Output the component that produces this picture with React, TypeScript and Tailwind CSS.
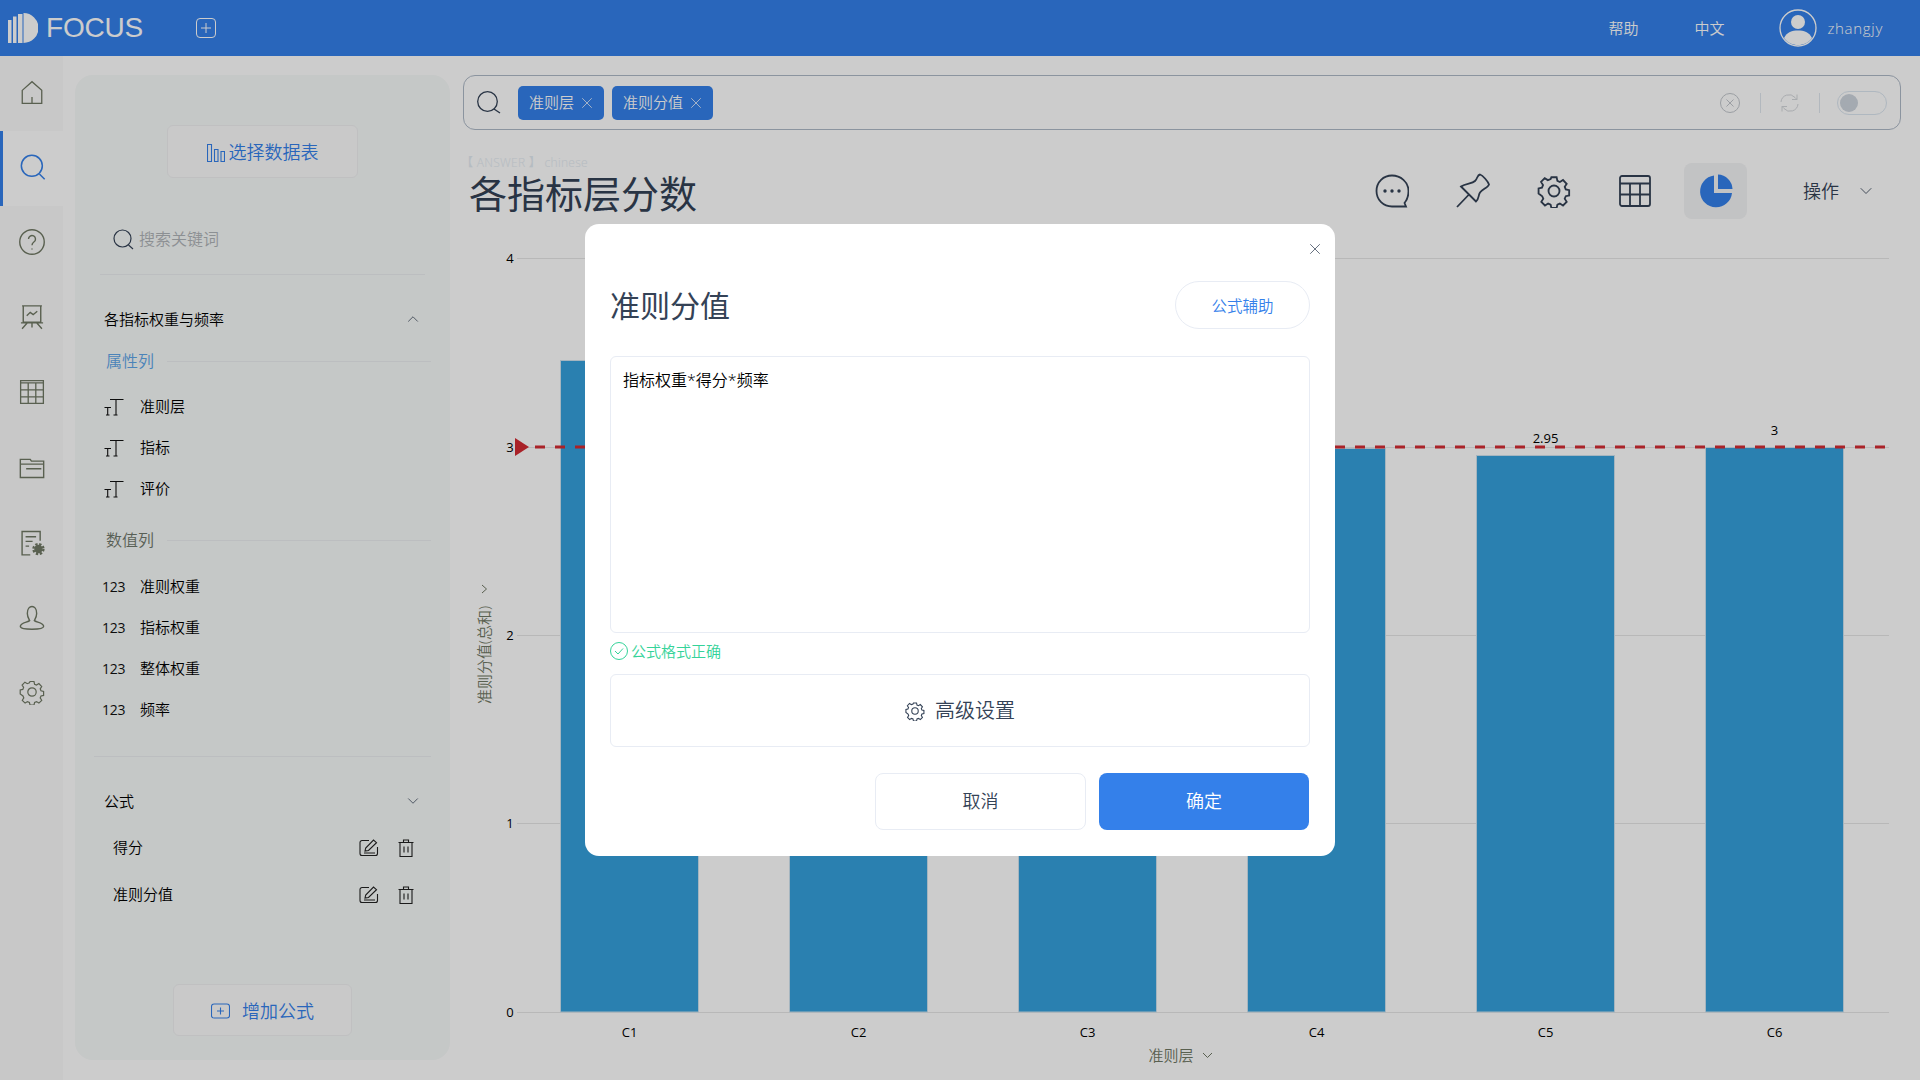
import { ChevronDown, ChevronUp, X } from "lucide-react";
import type { ReactNode } from "react";

const fontStack = { fontFamily: '"Open Sans", "Noto Sans CJK SC", sans-serif' };

function Ico({ size = 24, children, className, sw = 1.2 }: { size?: number; children: ReactNode; className?: string; sw?: number }) {
  return (
    <svg width={size} height={size} viewBox="0 0 24 24" fill="none" stroke="currentColor" strokeWidth={sw} className={className}>
      {children}
    </svg>
  );
}

const gearPath =
  "M10 2.5h4l.6 2.8 1.9.8 2.4-1.5 2.8 2.9-1.5 2.3.8 2 2.6.6v4l-2.6.6-.8 1.9 1.5 2.4-2.8 2.8-2.4-1.5-1.9.8-.6 2.6h-4l-.6-2.6-1.9-.8-2.4 1.5-2.8-2.8 1.5-2.4-.8-1.9L.2 15v-4l2.6-.6.8-2-1.5-2.3L4.900 3.200l2.400 1.500 2.100-.8z";

function Gear({ size = 24, sw = 1.2 }: { size?: number; sw?: number }) {
  return (
    <svg width={size} height={size} viewBox="-1 0 26 26" fill="none" stroke="currentColor" strokeWidth={sw}>
      <path d={gearPath} />
      <circle cx="12" cy="13" r="4.200" />
    </svg>
  );
}

const navIcons: ReactNode[] = [
  <Ico key="home" size={26}><path d="M3 10.500 12 2.500l9 8V22.500H3zM12 22.500v-6" /></Ico>,
  <Ico key="search" size={28} sw={1.300}><circle cx="11" cy="11" r="9" /><path d="M17.500 18l4.500 4.500" /></Ico>,
  <Ico key="help" size={28}><circle cx="12" cy="12" r="10.500" /><path d="M9 9.500a3 3 0 1 1 4.600 2.500c-1 .7-1.600 1.300-1.600 2.800M12 17.500v1" /></Ico>,
  <Ico key="board" size={28}><path d="M3.500 2.500h17M4.500 2.500v14h15v-14M2.500 17h19M8 17l-4.500 5M16 17l4.500 5M12 17v4M7.500 11l3-3 2.500 2 3.500-3" /></Ico>,
  <Ico key="table" size={26}><path d="M2.500 2.500h21v21h-21zM2.500 4.500h21M2.500 11h21M2.500 17.500h21M9.500 4.500v19M16.500 4.500v19" transform="translate(-1 -1)" /></Ico>,
  <Ico key="folder" size={28}><path d="M2 5.500h8.500l1 1.500H22v14H2zM2 9.500h20M7 13.500h13" /></Ico>,
  <Ico key="report" size={28}>
    <path d="M19 11V3H3.500v20h7M6.500 7.500h9M6.500 11.500h6M6.500 15.500h3" />
    <circle cx="17.500" cy="18" r="3" fill="currentColor" /><circle cx="17.500" cy="18" r="4.300" strokeDasharray="2 1.400" strokeWidth="2" />
  </Ico>,
  <Ico key="user" size={28}><path d="M8 9c0-8 8-8 8 0 0 3-1.500 5-2 6 1 1.500 8 1.800 8 5 0 2-4 2.500-10 2.500S2 22 2 20c0-3.200 7-3.500 8-5-.5-1-2-3-2-6z" /></Ico>,
  <div key="gear" className="flex"><Gear size={26} /></div>,
];

function TypeIcon() {
  return (
    <svg width="20" height="18" viewBox="0 0 20 18" fill="none" stroke="#111" strokeWidth="1.100" className="shrink-0">
      <path d="M6 1.500h13.500M12 1.500v15.500M9.500 17h4M.5 9.500h6.500M3.700 9.500V17M2 17h3.500" />
    </svg>
  );
}

function FieldRow({ icon, label }: { icon: ReactNode; label: string }) {
  return (
    <div className="flex h-[41px] items-center text-[15px] text-black">
      <div className="flex w-[36px] items-center">{icon}</div>
      <span>{label}</span>
    </div>
  );
}

function GroupTitle({ label, blue }: { label: string; blue?: boolean }) {
  return (
    <div className="flex h-[20px] items-center">
      <span className={`pl-[2px] text-[16px] leading-[20px] ${blue ? "text-[#5ea5e8]" : "text-[#70786c]"}`}>{label}</span>
      <div className="ml-[13px] h-px flex-1 bg-[#eceef0]" />
    </div>
  );
}

function FormulaRow({ label }: { label: string }) {
  return (
    <div className="flex h-[47px] items-center pl-[9px] pt-[2px] text-[15px] text-black">
      <span className="flex-1">{label}</span>
      <svg width="20" height="18" viewBox="0 0 20 18" fill="none" stroke="#222" strokeWidth="1.100" className="mr-[19px]">
        <path d="M10 1.500H3a2 2 0 0 0-2 2v11a2 2 0 0 0 2 2h13.500a2 2 0 0 0 2-2V8" />
        <path d="M6 12l.7-3L14.500 1l3 2.700L9.500 11.500zM5 14h11" />
      </svg>
      <svg width="16" height="18" viewBox="0 0 16 18" fill="none" stroke="#222" strokeWidth="1.100" className="mr-[36px]">
        <path d="M.5 3.500h15M2 3.500v14h12v-14M5.500 3.500V1h5v2.500M6 7.500v6M10 7.500v6" />
      </svg>
    </div>
  );
}

function SidePanel() {
  return (
    <aside className="ml-[12px] mt-[19px] flex h-[985px] w-[375px] flex-col rounded-[18px] bg-[#f7faf9]">
      <button className="ml-[92px] mt-[50px] flex h-[53px] w-[191px] items-center justify-center gap-[4px] rounded-[6px] border border-[#f0f1f2] bg-[#fcfcfc] pt-[2px] text-[18px] text-[#3480ea]">
        <svg width="18" height="18" viewBox="0 0 18 18" fill="none" stroke="currentColor" strokeWidth="1.100">
          <path d="M.5.500h4v17h-4zM7.500 5.500h3.500v12H7.500zM14 7.500h3.500v10H14z" />
        </svg>
        选择数据表
      </button>
      <div className="mx-[25px] mt-[40px] flex h-[57px] items-center gap-[5px] border-b border-[#eceef0] pb-[14px] pl-[13px]">
        <svg width="21" height="21" viewBox="0 0 21 21" fill="none" stroke="#344256" strokeWidth="1.200">
          <circle cx="9.500" cy="9.500" r="8.500" /><path d="M15.500 16l4.500 4" />
        </svg>
        <span className="text-[16px] text-[#b0b4b8]">搜索关键词</span>
      </div>
      <div className="mt-[34px] flex h-[20px] items-center justify-between pl-[29px] pr-[28px] text-[15px] text-black">
        <span>各指标权重与频率</span>
        <ChevronUp size={18} strokeWidth={1} className="text-[#344256]" />
      </div>
      <div className="ml-[29px] mr-[19px] mt-[22px]">
        <GroupTitle label="属性列" blue />
      </div>
      <div className="mt-[15px] pl-[29px]">
        <FieldRow icon={<TypeIcon />} label="准则层" />
        <FieldRow icon={<TypeIcon />} label="指标" />
        <FieldRow icon={<TypeIcon />} label="评价" />
      </div>
      <div className="ml-[29px] mr-[19px] mt-[21px]">
        <GroupTitle label="数值列" />
      </div>
      <div className="mt-[16px] pl-[29px]">
        {["准则权重", "指标权重", "整体权重", "频率"].map((f) => (
          <FieldRow key={f} icon={<span className="-ml-[2px] text-[14px] font-normal tracking-[-0.3px] text-[#111]">123</span>} label={f} />
        ))}
      </div>
      <div className="ml-[19px] mr-[19px] mt-[26px] h-px bg-[#eceef0]" />
      <div className="mt-[34px] flex h-[20px] items-center justify-between pl-[29px] pr-[28px] text-[15px] text-black">
        <span>公式</span>
        <ChevronDown size={18} strokeWidth={1} className="text-[#344256]" />
      </div>
      <div className="mt-[12px] pl-[29px]">
        <FormulaRow label="得分" />
        <FormulaRow label="准则分值" />
      </div>
      <button className="mb-[24px] ml-[98px] mt-auto flex h-[52px] w-[179px] items-center justify-center gap-[12px] rounded-[6px] border border-[#f0f1f2] bg-[#fcfcfc] pt-[2px] text-[18px] text-[#3480ea]">
        <svg width="19" height="18" viewBox="0 0 19 18" fill="none" stroke="currentColor" strokeWidth="1.100">
          <rect x=".5" y="2" width="18" height="14" rx="2.500" /><path d="M9.500 5.500v7M6 9h7" />
        </svg>
        增加公式
      </button>
    </aside>
  );
}

function Tag({ label }: { label: string }) {
  return (
    <div className="flex h-[34px] items-center gap-[4px] rounded-[5px] bg-[#3480ea] pl-[11px] pr-[8px] text-[15px] text-white">
      <span>{label}</span>
      <X size={18} strokeWidth={1} />
    </div>
  );
}

function SearchBar() {
  return (
    <div className="flex h-[55px] items-center rounded-[12px] border border-[#aeb9c7] pl-[13px] pr-[13px]">
      <svg width="24" height="23" viewBox="0 0 24 23" fill="none" stroke="#344256" strokeWidth="1.300">
        <circle cx="10.500" cy="10.500" r="9.800" /><path d="M17 18l6 4" />
      </svg>
      <div className="ml-[17px] flex gap-[8px]">
        <Tag label="准则层" />
        <Tag label="准则分值" />
      </div>
      <div className="ml-auto flex items-center text-[#c2c6cc]">
        <svg width="20" height="20" viewBox="0 0 20 20" fill="none" stroke="currentColor" strokeWidth="1">
          <circle cx="10" cy="10" r="9.500" /><path d="M6.500 6.500l7 7M13.500 6.500l-7 7" />
        </svg>
        <div className="ml-[20px] mr-[19px] h-[20px] w-px bg-[#dfe6ee]" />
        <svg width="19" height="20" viewBox="0 0 19 20" fill="none" stroke="#d4d7db" strokeWidth="1">
          <path d="M1 9a8 8 0 0 1 14-4.500l2 2M18 11a8 8 0 0 1-14 4.500l-2-2M17 1.500v5h-5M2 18.500v-5h5" />
        </svg>
        <div className="ml-[20px] mr-[17px] h-[20px] w-px bg-[#dfe6ee]" />
        <div className="flex h-[24px] w-[50px] items-center rounded-full border border-[#dbe6f0] pl-[2px]">
          <div className="h-[18px] w-[18px] rounded-full bg-[#cdd5de]" />
        </div>
      </div>
    </div>
  );
}

function ToolSlot({ children, active }: { children: ReactNode; active?: boolean }) {
  return (
    <div className={`flex h-[56px] w-[63px] items-center justify-center rounded-[8px] text-[#344256] ${active ? "bg-[#f3f4f5]" : ""}`}>
      {children}
    </div>
  );
}

function Toolbar() {
  return (
    <div className="flex items-center gap-[18px]">
      <ToolSlot>
        <svg width="34" height="34" viewBox="0 0 34 34" fill="none" stroke="currentColor" strokeWidth="1.800">
          <path d="M17 1.500C8.500 1.500 1.500 8 1.500 17S8.500 32.500 17 32.500h14l-1.500-3.500c2.500-3 4-7 4-12C33.500 8 25.500 1.500 17 1.500z" />
          <circle cx="10" cy="17" r="1.700" fill="currentColor" stroke="none" /><circle cx="17" cy="17" r="1.700" fill="currentColor" stroke="none" /><circle cx="24" cy="17" r="1.700" fill="currentColor" stroke="none" />
        </svg>
      </ToolSlot>
      <ToolSlot>
        <svg width="34" height="36" viewBox="0 0 34 36" fill="none" stroke="currentColor" strokeWidth="1.800">
          <path d="M1 34l11.500-12M5 13.500l15 15c3-2 2-6 4-9s8-5 9-8c-1-3-6-9-9-10-3 .5-2 3.500-5 6.500s-9 2-14 5.500z" />
        </svg>
      </ToolSlot>
      <ToolSlot><Gear size={34} sw={1.400} /></ToolSlot>
      <ToolSlot>
        <svg width="32" height="32" viewBox="0 0 32 32" fill="none" stroke="currentColor" strokeWidth="1.800">
          <rect x="1" y="1" width="30" height="30" rx="2" /><path d="M1 8.500h30M1 19.500h30M11 8.500V31M21 8.500V31" />
        </svg>
      </ToolSlot>
      <ToolSlot active>
        <svg width="34" height="34" viewBox="0 0 34 34" fill="#3480ea">
          <path d="M15 1.500A16 16 0 1 0 33 19H15z" /><path d="M19 .5V15h14.500A15 15 0 0 0 19 .5z" />
        </svg>
      </ToolSlot>
      <div className="ml-[38px] flex items-center gap-[17px] pr-[25px] text-[18px] text-[#344256]">
        <span>操作</span>
        <ChevronDown size={20} strokeWidth={1} />
      </div>
    </div>
  );
}

const bars = [
  { x: 561, top: 361, label: "C1" },
  { x: 790, top: 361, label: "C2" },
  { x: 1019, top: 361, label: "C3" },
  { x: 1248, top: 449, label: "C4" },
  { x: 1477, top: 456, label: "C5", value: "2.95" },
  { x: 1706, top: 448, label: "C6", value: "3" },
];

function Chart() {
  const ticks = [
    { y: 258, t: "4" },
    { y: 447, t: "3" },
    { y: 635, t: "2" },
    { y: 823, t: "1" },
    { y: 1012, t: "0" },
  ];
  return (
    <svg viewBox="463 219 1438 861" className="block h-[861px] w-[1438px]" style={fontStack}>
      {ticks.map((k) => (
        <g key={k.t}>
          <line x1="517" x2="1889" y1={k.y + 0.5} y2={k.y + 0.5} stroke="#e6e6e6" />
          <text x="510" y={k.y + 5} fontSize="13" fontWeight="400" textAnchor="middle" fill="#000">{k.t}</text>
        </g>
      ))}
      {bars.map((b) => (
        <g key={b.label}>
          <rect x={b.x - 0.5} y={b.top - 0.5} width="138" height={1012.5 - b.top} fill="#35a1dc" stroke="#cfe3ef" />
          <text x={b.x + 68.5} y="1037" fontSize="13" fontWeight="400" textAnchor="middle" fill="#000">{b.label}</text>
          {b.value && (
            <text x={b.x + 68.5} y={b.value === "3" ? 435 : 443} fontSize="13" fontWeight="400" textAnchor="middle" fill="#000">{b.value}</text>
          )}
        </g>
      ))}
      <line x1="535" x2="1886" y1="447" y2="447" stroke="#d42b33" strokeWidth="3" strokeDasharray="10 10" />
      <path d="M515 438l14 9-14 9z" fill="#d42b33" />
      <text x="1171" y="1061" fontSize="15" textAnchor="middle" fill="#707864">准则层</text>
      <path d="M1203 1053l4.500 4.500 4.500-4.500" fill="none" stroke="#707864" />
      <text transform="translate(490 704) rotate(-90)" fontSize="15" fill="#707864">准则分值(总和)</text>
      <path d="M482 585l4.500 4-4.500 4" fill="none" stroke="#707864" />
    </svg>
  );
}

function Modal() {
  return (
    <div className="absolute inset-0 z-10 flex items-center justify-center bg-black/20">
      <div className="relative flex h-[632px] w-[750px] flex-col rounded-[14px] bg-white px-[25px]">
        <X size={18} strokeWidth={1} className="absolute right-[11px] top-[16px] text-[#344256]" />
        <div className="mt-[57px] flex h-[48px] items-center justify-between">
          <h2 className="text-[30px] font-normal text-[#344256]">准则分值</h2>
          <button className="h-[48px] w-[135px] rounded-full border border-[#e8ecf4] pt-[3px] text-[15.5px] text-[#3480ea]">公式辅助</button>
        </div>
        <textarea
          readOnly
          defaultValue="指标权重*得分*频率"
          className="mt-[27px] h-[277px] w-full resize-none rounded-[6px] border border-[#e8ecf4] px-[12px] py-[11px] text-[16px] font-[350] text-black outline-none"
        />
        <div className="mt-[9px] flex h-[18px] items-center gap-[3px] text-[15px] text-[#34d399]">
          <svg width="18" height="18" viewBox="0 0 18 18" fill="none" stroke="currentColor" strokeWidth="1">
            <circle cx="9" cy="9" r="8.500" /><path d="M5 9l3 3 5-5.500" />
          </svg>
          公式格式正确
        </div>
        <button className="mt-[14px] flex h-[73px] w-full items-center justify-center gap-[10px] rounded-[6px] border border-[#e8ecf4] text-[20px] text-[#344256]">
          <Gear size={20} sw={1.400} />
          高级设置
        </button>
        <div className="mr-[1px] mt-[26px] flex justify-end gap-[13px]">
          <button className="h-[57px] w-[211px] rounded-[8px] border border-[#e8ecf4] text-[18px] text-[#344256]">取消</button>
          <button className="h-[57px] w-[210px] rounded-[8px] bg-[#3480ea] text-[18px] text-white">确定</button>
        </div>
      </div>
    </div>
  );
}

export default function App() {
  return (
    <div className="relative flex h-screen w-full flex-col overflow-hidden bg-white font-[350]" style={fontStack}>
      <header className="flex h-[56px] items-center bg-[#3480ea] text-white">
        <svg width="30" height="30" viewBox="0 0 30 30" fill="white" className="ml-[8px]">
          <path d="M0 7h3.500v23H0zM5 3.500h3.500V30H5zM10 1h4.500v29H10zM15.500 0a15 15 0 0 1 0 30z" />
        </svg>
        <span className="ml-[8px] text-[28px] font-normal tracking-[-0.2px]" style={{ fontFamily: '"Liberation Sans", sans-serif' }}>FOCUS</span>
        <svg width="20" height="20" viewBox="0 0 20 20" fill="none" stroke="white" strokeWidth="1" className="ml-[53px]">
          <rect x=".5" y=".5" width="19" height="19" rx="3.500" /><path d="M10 5v10M5 10h10" />
        </svg>
        <div className="ml-auto flex items-center text-[15px]">
          <span>帮助</span>
          <span className="ml-[56px]">中文</span>
          <svg width="38" height="38" viewBox="0 0 38 38" className="ml-[55px]">
            <circle cx="19" cy="19" r="18" fill="none" stroke="white" strokeWidth="1.300" />
            <circle cx="19" cy="13" r="7" fill="white" />
            <path d="M5 29c3-6 8-7.500 14-7.500S30 23 33 29c-3 4.500-8.500 7-14 7S8 33.500 5 29z" fill="white" />
          </svg>
          <span className="ml-[10px] mr-[37px] tracking-[0.7px]">zhangjy</span>
        </div>
      </header>
      <div className="flex flex-1">
        <nav className="flex w-[63px] flex-col bg-[#fafbfa] text-[#707864]">
          {navIcons.map((icon, i) => (
            <div
              key={i}
              className={`flex h-[75px] items-center justify-center pb-[4px] ${i === 1 ? "border-l-[3px] border-[#3480ea] bg-white text-[#3480ea]" : ""}`}
            >
              {icon}
            </div>
          ))}
        </nav>
        <SidePanel />
        <main className="ml-[13px] w-[1438px] pt-[19px]">
          <SearchBar />
          <div className="mt-[25px] flex h-[64px] items-end justify-between">
            <div className="self-start pl-[6px]">
              <div className="-ml-[8px] h-[15px] text-[12px] leading-[15px] tracking-[0.3px] text-[#e3ebf2]">【 ANSWER 】 chinese</div>
              <h1 className="text-[38px] font-normal leading-[46px] text-[#344256]">各指标层分数</h1>
            </div>
            <Toolbar />
          </div>
          <Chart />
        </main>
      </div>
      <Modal />
    </div>
  );
}
